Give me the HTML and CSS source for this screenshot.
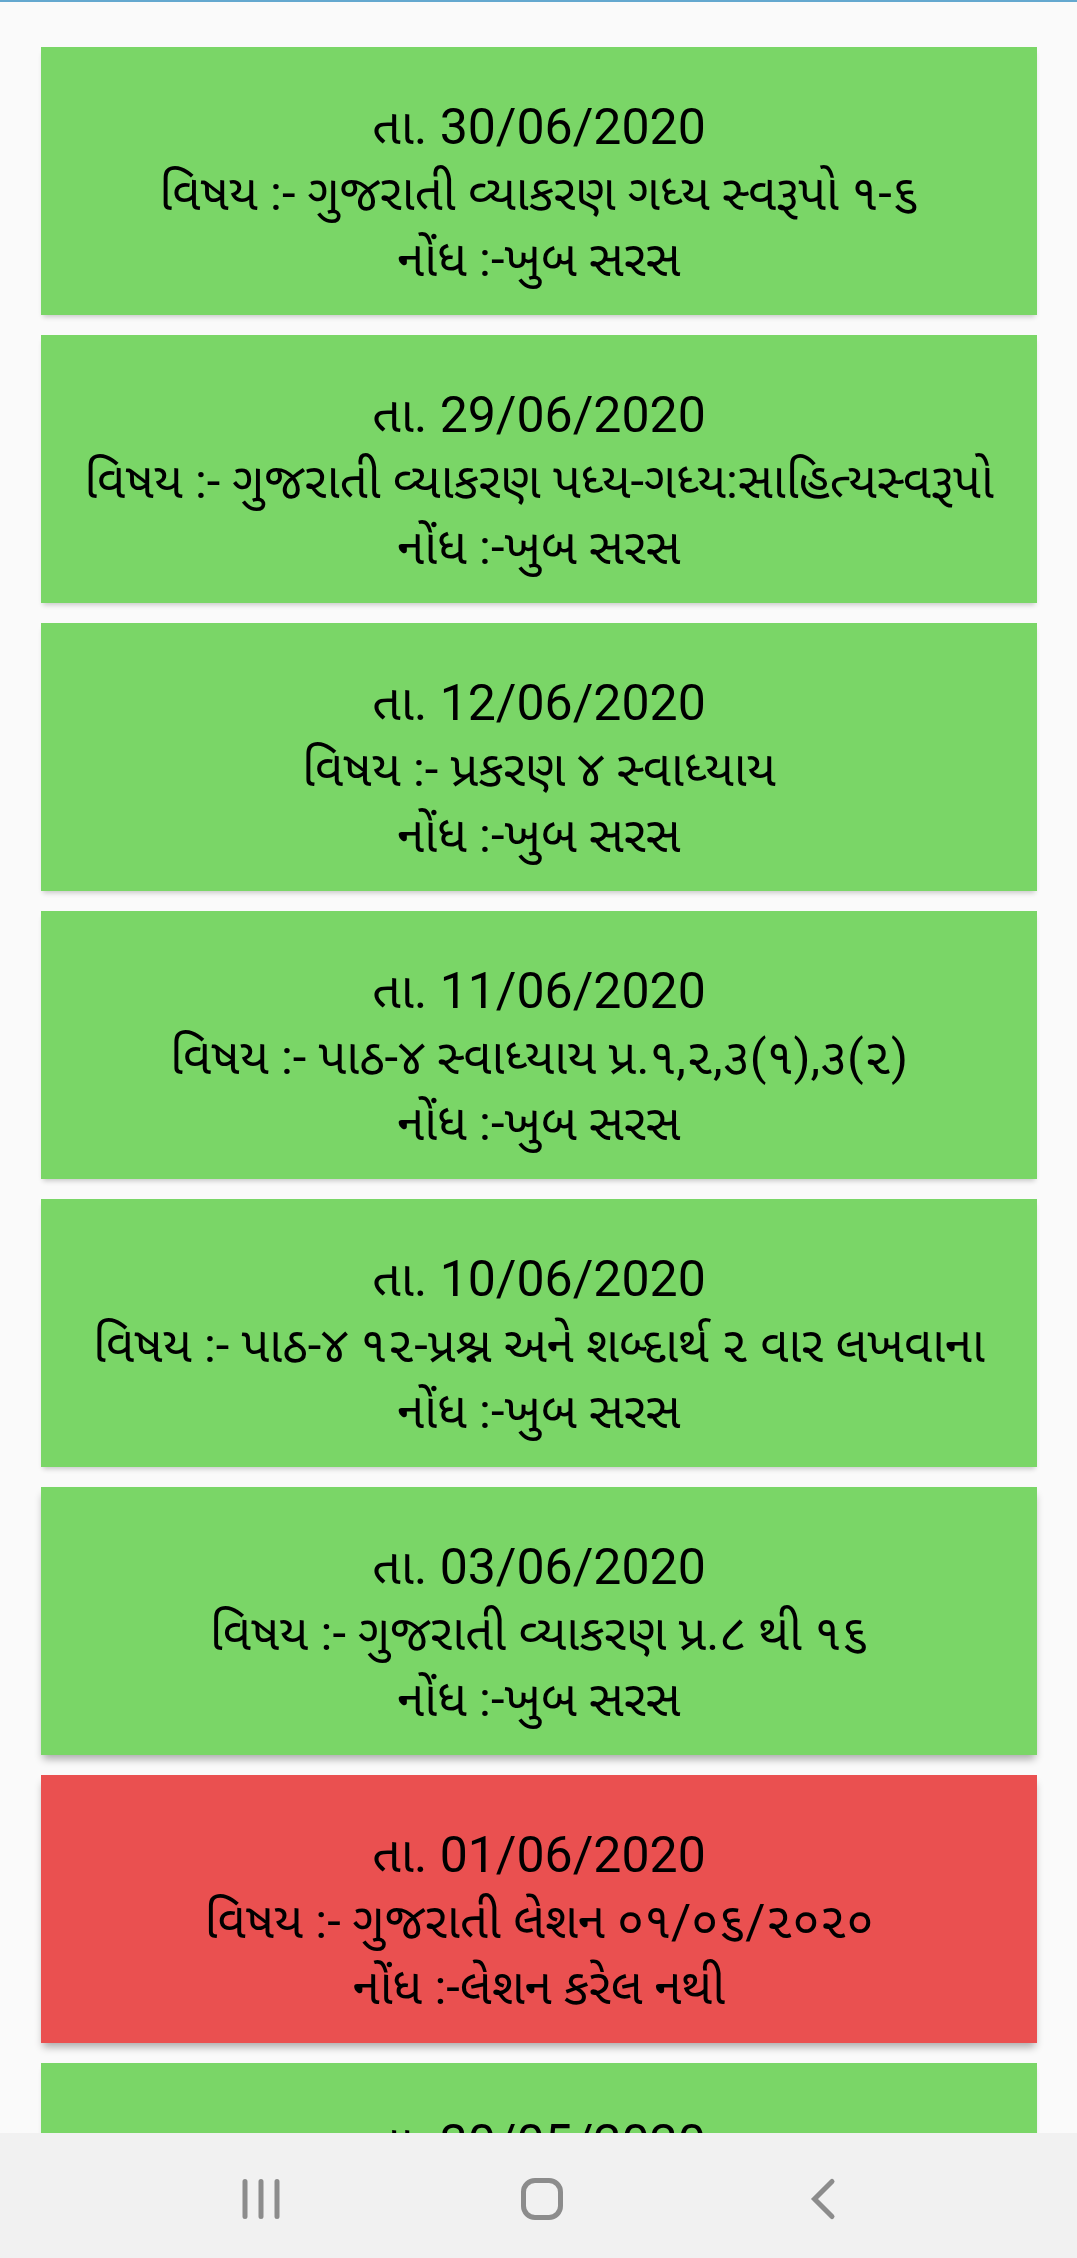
FILE: index.html
```html
<!DOCTYPE html>
<html lang="gu">
<head>
<meta charset="utf-8">
<meta name="viewport" content="width=device-width, initial-scale=1">
<title>ગુજરાતી</title>
<link rel="stylesheet" href="styles.css">
</head>
<body>
<main class="list">
<article class="card"><p class="date">તા. 30/06/2020</p><p>વિષય :- ગુજરાતી વ્યાકરણ ગધ્ય સ્વરૂપો ૧-૬</p><p>નોંધ :-ખુબ સરસ</p></article>
<article class="card"><p class="date">તા. 29/06/2020</p><p>વિષય :- ગુજરાતી વ્યાકરણ પધ્ય-ગધ્ય:સાહિત્યસ્વરૂપો</p><p>નોંધ :-ખુબ સરસ</p></article>
<article class="card"><p class="date">તા. 12/06/2020</p><p>વિષય :- પ્રકરણ ૪ સ્વાધ્યાય</p><p>નોંધ :-ખુબ સરસ</p></article>
<article class="card"><p class="date">તા. 11/06/2020</p><p>વિષય :- પાઠ-૪ સ્વાધ્યાય પ્ર.૧,૨,૩(૧),૩(૨)</p><p>નોંધ :-ખુબ સરસ</p></article>
<article class="card"><p class="date">તા. 10/06/2020</p><p>વિષય :- પાઠ-૪ ૧૨-પ્રશ્ન અને શબ્દાર્થ ૨ વાર લખવાના</p><p>નોંધ :-ખુબ સરસ</p></article>
<article class="card raised"><p class="date">તા. 03/06/2020</p><p>વિષય :- ગુજરાતી વ્યાકરણ પ્ર.૮ થી ૧૬</p><p>નોંધ :-ખુબ સરસ</p></article>
<article class="card missed raised"><p class="date">તા. 01/06/2020</p><p>વિષય :- ગુજરાતી લેશન ૦૧/૦૬/૨૦૨૦</p><p>નોંધ :-લેશન કરેલ નથી</p></article>
<article class="card"><p class="date">તા. 30/05/2020</p></article>
</main>
<nav class="navbar">
<button class="nav-button" type="button" aria-label="Recents"><svg width="48" height="48" viewBox="0 0 48 48"><path d="M8 6.5v35M24 6.5v35M40 6.5v35"/></svg></button>
<button class="nav-button" type="button" aria-label="Home"><svg width="48" height="48" viewBox="0 0 48 48"><rect x="5.5" y="5.5" width="37" height="37" rx="11.5"/></svg></button>
<button class="nav-button" type="button" aria-label="Back"><svg width="48" height="48" viewBox="0 0 48 48"><path d="M33 6.5L15.500 24 33 41.5"/></svg></button>
</nav>
</body>
</html>
```
FILE: styles.css
```css
* { box-sizing: border-box; }
body { margin: 0; height: 100vh; display: flex; flex-direction: column; background: #fafafa; color: #000; font-family: Roboto, "Noto Sans Gujarati", "Noto Sans", sans-serif; border-top: 2px solid #64a8cf; }
.list { flex: 1; min-height: 0; overflow: hidden; padding: 45px 40px 0 41px; display: flex; flex-direction: column; gap: 20px; }
.card { flex: none; padding: 47px 20px 22px; background: #7ad667; box-shadow: 0 4px 5px -2px rgba(0,0,0,.2); text-align: center; font-size: 49px; line-height: 66px; }
.card p { margin: 0; white-space: nowrap; }
.card .date { font-size: 50px; line-height: 67px; }
.raised { box-shadow: 0 6px 8px -2px rgba(0,0,0,.32); }
.missed { background: #ea5050; }
.navbar { flex: none; height: 125px; padding: 7px 0 0 7px; display: flex; justify-content: center; gap: 233px; align-items: center; background: #f1f1f1; }
.nav-button { border: 0; padding: 0; background: none; width: 48px; height: 48px; }
.nav-button svg { display: block; fill: none; stroke: #8c8c8c; stroke-width: 5; stroke-linecap: round; }
```
